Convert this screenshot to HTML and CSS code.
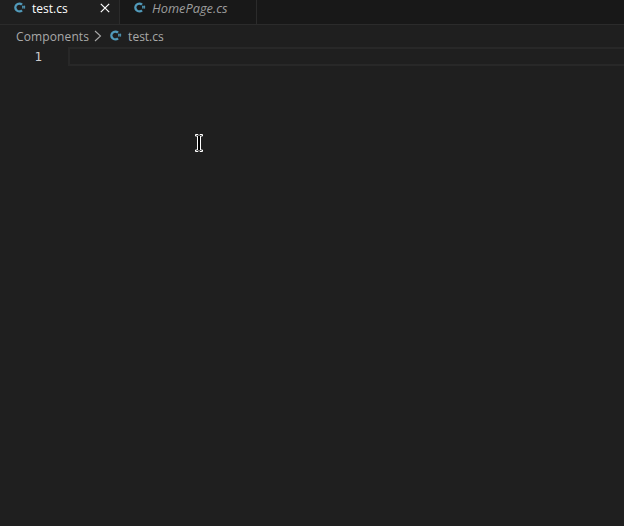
FILE: index.html
```html
<!DOCTYPE html>
<html lang="en">
<head>
<meta charset="utf-8">
<title>test.cs</title>
<link rel="stylesheet" href="styles.css">
</head>
<body>
<div class="editor">
  <div class="tabs">
    <div class="tab tab-active">
      <svg class="cs-icon" viewBox="0 0 12 12"><path class="cs-c" d="M8 2.700A3.900 3.900 0 1 0 8 8.300"/><path class="cs-hash" d="M8.800 3.600v3M10.400 3.600v3M8 4.400h3.200M8 5.800h3.200"/></svg>
      <span class="tab-label">test.cs</span>
      <svg class="close" viewBox="0 0 10 10"><path d="M.8.800l8.400 8.400M9.200.800L.8 9.200"/></svg>
    </div>
    <div class="tab tab-preview">
      <svg class="cs-icon" viewBox="0 0 12 12"><path class="cs-c" d="M8 2.700A3.900 3.900 0 1 0 8 8.300"/><path class="cs-hash" d="M8.800 3.600v3M10.400 3.600v3M8 4.400h3.200M8 5.800h3.200"/></svg>
      <span class="tab-label tab-label-wide">HomePage.cs</span>
    </div>
  </div>
  <div class="crumbs">
    <span class="crumb-folder">Components</span>
    <svg class="chevron" viewBox="0 0 9 12"><path d="M2 1L7.500 6L2 11"/></svg>
    <svg class="cs-icon" viewBox="0 0 12 12"><path class="cs-c" d="M8 2.700A3.900 3.900 0 1 0 8 8.300"/><path class="cs-hash" d="M8.800 3.600v3M10.400 3.600v3M8 4.400h3.200M8 5.800h3.200"/></svg>
    <span>test.cs</span>
  </div>
  <div class="line">
    <div class="gutter">1</div>
    <div class="current"></div>
  </div>
  <svg class="ibeam" viewBox="0 0 10 20"><path class="ibeam-out" d="M1.500 1.500h2.500l1 1 1-1h2.500v1.500h-2v14h2v1.500h-2.500l-1-1-1 1h-2.500v-1.500h2v-14h-2z"/></svg>
</div>
</body>
</html>
```
FILE: styles.css
```css
html, body {
  margin: 0;
  height: 100%;
  background: #1f1f1f;
}
.editor {
  position: relative;
  height: 526px;
  overflow: hidden;
  background: #1f1f1f;
  font-family: "Open Sans", "Noto Sans", sans-serif;
  font-size: 12px;
}
.tabs {
  display: flex;
  height: 25px;
  background: #181818;
  border-bottom: 1px solid #2b2b2b;
  box-sizing: border-box;
}
.tab {
  display: flex;
  align-items: flex-start;
  box-sizing: border-box;
  height: 24px;
  padding: 1px 0 0 14px;
  border-right: 1px solid #2b2b2b;
  line-height: 15px;
}
.tab-active {
  width: 120px;
  background: #1f1f1f;
  color: #ffffff;
}
.tab-preview {
  width: 137px;
  color: #9d9d9d;
  font-style: italic;
}
.cs-icon {
  flex: none;
  width: 12px;
  height: 12px;
  margin-top: 1px;
}
.cs-c {
  fill: none;
  stroke: #519aba;
  stroke-width: 2.400;
}
.cs-hash {
  fill: none;
  stroke: #519aba;
  stroke-width: 0.800;
}
.tab-label {
  margin-left: 6px;
}
.tab-label-wide {
  font-size: 12.800px;
}
.close {
  width: 10px;
  height: 10px;
  margin: 2px 0 0 32px;
}
.close path {
  fill: none;
  stroke: #ffffff;
  stroke-width: 1.200;
}
.crumbs {
  display: flex;
  align-items: center;
  height: 22px;
  padding-left: 16px;
  color: #a9a9a9;
}
.crumb-folder {
  letter-spacing: 0.120px;
}
.chevron {
  width: 9px;
  height: 12px;
  margin: 0 8px 0 4px;
}
.chevron path {
  fill: none;
  stroke: #a9a9a9;
  stroke-width: 1.100;
}
.crumbs .cs-icon {
  margin: 0 6px 0 0;
}
.line {
  display: flex;
  height: 19px;
}
.gutter {
  width: 42px;
  padding-right: 26px;
  box-sizing: content-box;
  text-align: right;
  color: #cccccc;
  font-family: "DejaVu Sans Mono", monospace;
  font-size: 12.500px;
  line-height: 20px;
}
.current {
  flex: 1;
  border: 2px solid #282828;
  border-right: 0;
}
.ibeam {
  position: absolute;
  left: 194px;
  top: 133px;
  width: 10px;
  height: 20px;
}
.ibeam-out {
  fill: #000000;
  stroke: #ffffff;
  stroke-width: 1;
}
```
